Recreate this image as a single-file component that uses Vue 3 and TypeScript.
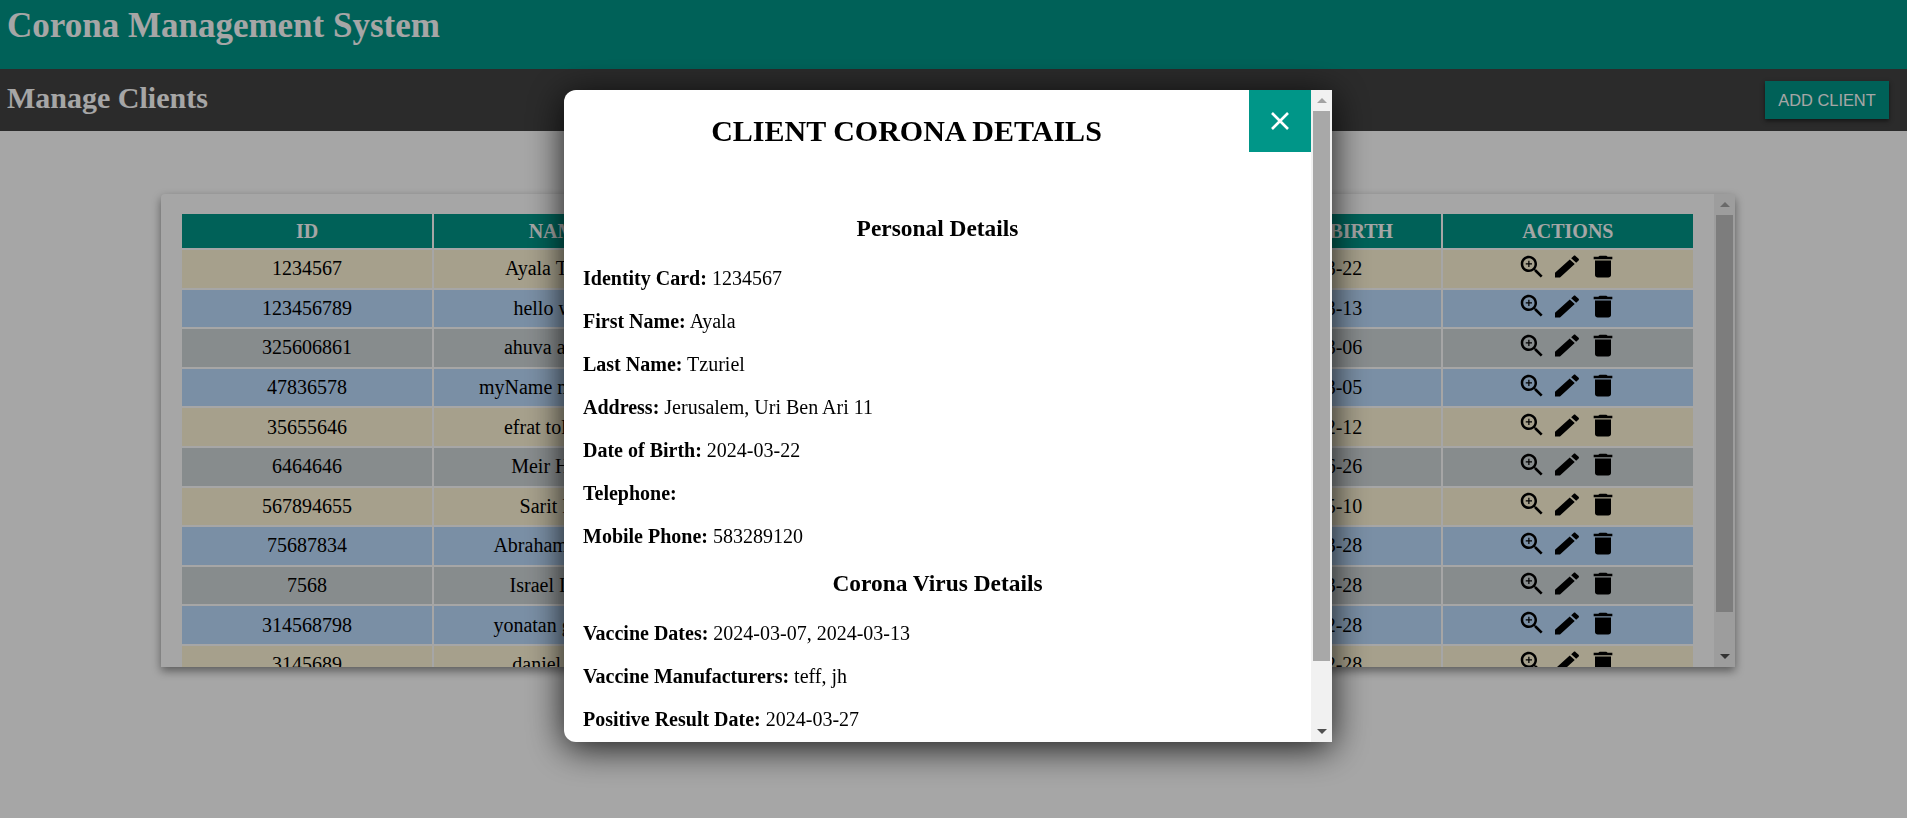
<template>
  <div class="page">
    <header class="top-bar">
      <h1>Corona Management System</h1>
    </header>
    <div class="sub-bar">
      <h2>Manage Clients</h2>
      <button class="add-btn">ADD CLIENT</button>
    </div>

    <main class="card">
      <div class="card-content">
        <table class="clients">
          <thead>
            <tr>
              <th v-for="col in columns" :key="col">{{ col }}</th>
            </tr>
          </thead>
          <tbody>
            <tr v-for="client in clients" :key="client.id" :class="client.tone">
              <td>{{ client.id }}</td>
              <td>{{ client.name }}</td>
              <td>{{ client.address }}</td>
              <td>{{ client.mobile }}</td>
              <td>{{ client.birth }}</td>
              <td>
                <div class="actions">
                  <svg class="icon zoom-icon" viewBox="0 0 24 24">
                    <path d="M15.5 14h-.79l-.28-.27C15.41 12.59 16 11.11 16 9.5 16 5.91 13.09 3 9.5 3S3 5.91 3 9.5 5.91 16 9.5 16c1.61 0 3.09-.59 4.23-1.57l.27.28v.79l5 4.99L20.49 19l-4.99-5zm-6 0C7.01 14 5 11.99 5 9.5S7.01 5 9.5 5 14 7.01 14 9.5 11.99 14 9.5 14z" />
                    <path d="M12 10h-2v2H9v-2H7V9h2V7h1v2h2v1z" />
                  </svg>
                  <svg class="icon" viewBox="0 0 24 24" preserveAspectRatio="none">
                    <path d="M3 17.25V21h3.75L17.81 9.94l-3.75-3.75L3 17.25zM20.71 7.04c.39-.39.39-1.02 0-1.41l-2.34-2.34c-.39-.39-1.02-.39-1.41 0l-1.83 1.83 3.75 3.75 1.83-1.83z" />
                  </svg>
                  <svg class="icon" viewBox="0 0 24 24" preserveAspectRatio="none">
                    <path d="M6 19c0 1.1.9 2 2 2h8c1.1 0 2-.9 2-2V7H6v12zM19 4h-3.5l-1-1h-5l-1 1H5v2h14V4z" />
                  </svg>
                </div>
              </td>
            </tr>
          </tbody>
        </table>
      </div>
      <div class="scrollbar card-bar">
        <div class="arrow-box"><span class="arrow up"></span></div>
        <div class="track"><div class="thumb"></div></div>
        <div class="arrow-box"><span class="arrow down"></span></div>
      </div>
    </main>

    <div class="overlay">
      <section class="modal">
        <div class="modal-content">
          <div class="modal-head">
            <h2 class="modal-title">CLIENT CORONA DETAILS</h2>
            <button class="close-btn" aria-label="Close">
              <svg viewBox="0 0 18 18" width="18" height="18">
                <path d="M1 1L17 17M17 1L1 17" />
              </svg>
            </button>
          </div>
          <div class="modal-body">
            <h3>Personal Details</h3>
            <p v-for="row in personal" :key="row.label"><b>{{ row.label }}:</b> {{ row.value }}</p>
            <h3>Corona Virus Details</h3>
            <p v-for="row in corona" :key="row.label"><b>{{ row.label }}:</b> {{ row.value }}</p>
          </div>
        </div>
        <div class="scrollbar modal-bar">
          <div class="arrow-box"><span class="arrow up"></span></div>
          <div class="track"><div class="thumb"></div></div>
          <div class="arrow-box"><span class="arrow down"></span></div>
        </div>
      </section>
    </div>
  </div>
</template>

<script setup lang="ts">
interface Client {
  id: string;
  name: string;
  address: string;
  mobile: string;
  birth: string;
  tone: "beige" | "blue" | "gray";
}

const columns = ["ID", "NAME", "ADDRESS", "MOBILE PHONE", "DATE OF BIRTH", "ACTIONS"];

const clients: Client[] = [
  { id: "1234567", name: "Ayala Tzuriel", address: "Jerusalem", mobile: "583289120", birth: "2024-03-22", tone: "beige" },
  { id: "123456789", name: "hello world", address: "Jerusalem", mobile: "583289121", birth: "2024-03-13", tone: "blue" },
  { id: "325606861", name: "ahuva abrams", address: "Bnei Brak", mobile: "583289122", birth: "2024-03-06", tone: "gray" },
  { id: "47836578", name: "myName myFamily", address: "Haifa", mobile: "583289123", birth: "2024-03-05", tone: "blue" },
  { id: "35655646", name: "efrat toledano", address: "Ashdod", mobile: "583289124", birth: "2024-02-12", tone: "beige" },
  { id: "6464646", name: "Meir Hadad", address: "Tzfat", mobile: "583289125", birth: "2024-06-26", tone: "gray" },
  { id: "567894655", name: "Sarit Levi", address: "Netanya", mobile: "583289126", birth: "2024-05-10", tone: "beige" },
  { id: "75687834", name: "Abraham Cohen", address: "Hebron", mobile: "583289127", birth: "2024-03-28", tone: "blue" },
  { id: "7568", name: "Israel Israeli", address: "Tel Aviv", mobile: "583289128", birth: "2024-03-28", tone: "gray" },
  { id: "314568798", name: "yonatan gershon", address: "Modiin", mobile: "583289129", birth: "2024-02-28", tone: "blue" },
  { id: "3145689", name: "daniel amar", address: "Eilat", mobile: "583289130", birth: "2024-02-28", tone: "beige" },
];

const personal = [
  { label: "Identity Card", value: "1234567" },
  { label: "First Name", value: "Ayala" },
  { label: "Last Name", value: "Tzuriel" },
  { label: "Address", value: "Jerusalem, Uri Ben Ari 11" },
  { label: "Date of Birth", value: "2024-03-22" },
  { label: "Telephone", value: "" },
  { label: "Mobile Phone", value: "583289120" },
];

const corona = [
  { label: "Vaccine Dates", value: "2024-03-07, 2024-03-13" },
  { label: "Vaccine Manufacturers", value: "teff, jh" },
  { label: "Positive Result Date", value: "2024-03-27" },
];
</script>

<style scoped>
.page {
  height: 818px;
  overflow: hidden;
  font-family: "Liberation Serif", "Times New Roman", serif;
  color: #000;
}
.top-bar {
  height: 69px;
  background: #009688;
  color: #fff;
  padding: 0 7px;
  box-sizing: border-box;
}
.top-bar h1 {
  margin: 0;
  padding-top: 5px;
  font-size: 35px;
  line-height: 41px;
}
.sub-bar {
  height: 62px;
  background: #424242;
  color: #fff;
  display: flex;
  align-items: center;
  justify-content: space-between;
  padding: 0 18px 0 7px;
}
.sub-bar h2 {
  margin: 0 0 4px;
  font-size: 30px;
}
.add-btn {
  width: 124px;
  height: 38px;
  border: none;
  background: #009688;
  color: #fff;
  font-family: "Liberation Sans", Arial, sans-serif;
  font-size: 16.4px;
  box-shadow: 0 2px 4px rgba(0, 0, 0, 0.5);
}
.card {
  height: 473px;
  margin: 63px 172px 0 161px;
  display: flex;
  background: #fff;
  border-radius: 4px 4px 0 0;
  box-shadow: 0 4px 10px rgba(0, 0, 0, 0.45);
}
.card-content {
  flex: 1;
  min-width: 0;
  overflow: hidden;
  padding: 18px 19px 0;
}
.clients {
  width: 1515px;
  table-layout: fixed;
  border-spacing: 2px;
}
.clients th {
  height: 34px;
  padding: 0;
  background: #009688;
  color: #fff;
  font-size: 20px;
}
.clients td {
  height: 37.6px;
  padding: 0;
  text-align: center;
  font-size: 20px;
}
.beige td {
  background: #fff6d7;
}
.blue td {
  background: #bcdcfe;
}
.gray td {
  background: #d0d7d9;
}
.actions {
  display: flex;
  justify-content: center;
  align-items: center;
  gap: 4px;
  margin-top: -4px;
}
.icon {
  width: 32px;
  height: 29px;
  flex: none;
}
.zoom-icon {
  width: 30px;
  height: 30px;
}
.overlay {
  position: fixed;
  inset: 0;
  background: rgba(0, 0, 0, 0.35);
  display: flex;
  justify-content: center;
  padding: 90px 11px 0 0;
  box-sizing: border-box;
}
.modal {
  width: 768px;
  height: 652px;
  display: flex;
  background: #fff;
  border-radius: 12px 0 0 12px;
  box-shadow: 0 6px 36px rgba(0, 0, 0, 0.85);
}
.modal-content {
  flex: 1;
  min-width: 0;
  overflow: hidden;
  border-radius: 12px 0 0 12px;
}
.modal-head {
  display: flex;
  align-items: flex-start;
  margin-bottom: 40px;
}
.modal-title {
  flex: 1;
  margin: 0;
  padding-top: 24px;
  text-align: center;
  font-size: 30px;
  line-height: 34px;
}
.close-btn {
  width: 62px;
  height: 62px;
  border: none;
  padding: 0;
  background: #009688;
  display: flex;
  align-items: center;
  justify-content: center;
}
.close-btn path {
  stroke: #fff;
  stroke-width: 2.6;
  fill: none;
}
.modal-body {
  padding: 0 19px;
}
.modal-body h3 {
  margin: 0;
  padding: 24px 0 5px;
  text-align: center;
  font-size: 23.4px;
  line-height: 25px;
}
.modal-body p {
  margin: 21px 0 0;
  font-size: 20px;
  line-height: 22px;
}
.scrollbar {
  width: 21px;
  flex: none;
  display: flex;
  flex-direction: column;
  background: #f1f1f1;
}
.arrow-box {
  height: 21px;
  display: flex;
  align-items: center;
  justify-content: center;
}
.arrow {
  width: 0;
  height: 0;
  border-left: 5px solid transparent;
  border-right: 5px solid transparent;
}
.arrow.up {
  border-bottom: 5px solid #a3a3a3;
}
.arrow.down {
  border-top: 5px solid #505050;
}
.track {
  flex: 1;
  padding: 0 2px;
}
.card-bar .thumb {
  height: 397px;
  background: #c1c1c1;
}
.modal-bar .thumb {
  height: 550px;
  background: #a8a8a8;
}
</style>

<style>
html,
body {
  margin: 0;
  background: #fff;
  overflow: hidden;
}
</style>
